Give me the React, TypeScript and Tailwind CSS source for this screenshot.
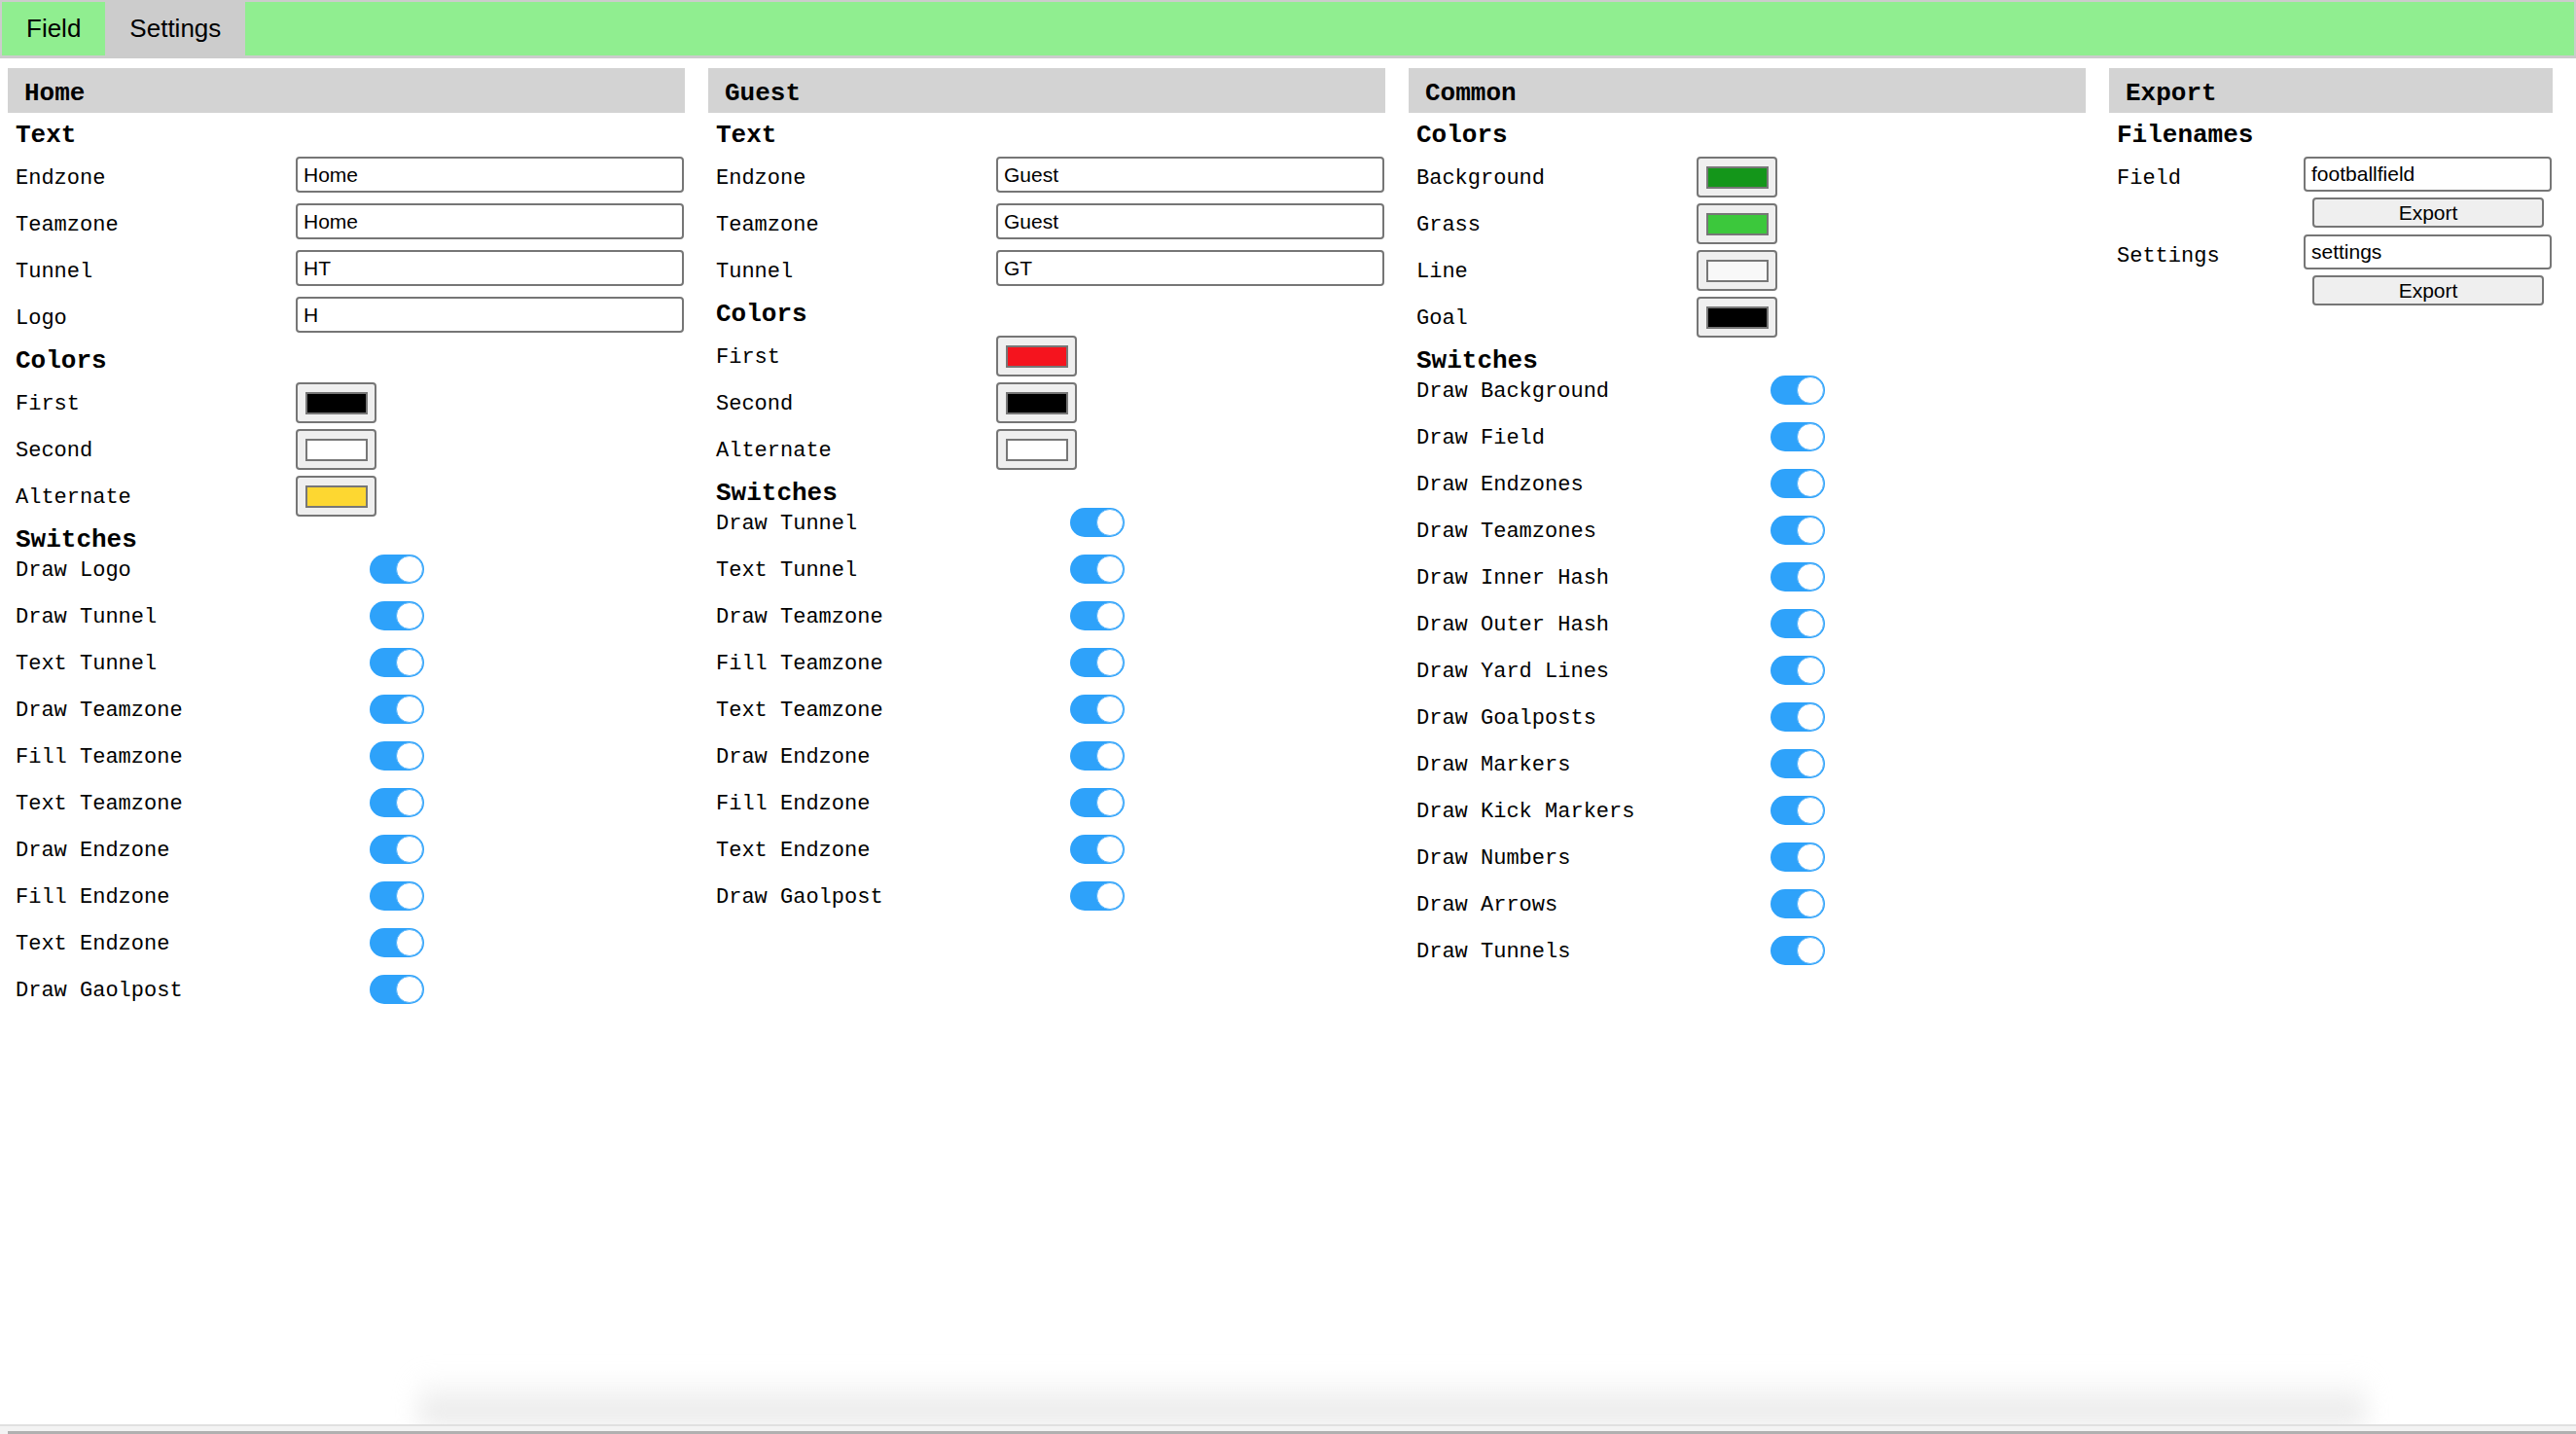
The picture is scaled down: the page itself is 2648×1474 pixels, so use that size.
import React from "react";

const MONO = "font-['Liberation_Mono',monospace]";
const SANS = "font-['Liberation_Sans',Arial,sans-serif]";

function Header({ children }: { children: React.ReactNode }) {
  return (
    <div className={`h-[46px] bg-[#d3d3d3] pl-[17px] pt-[13px] text-[26px] leading-[26px] font-bold text-black ${MONO}`}>
      {children}
    </div>
  );
}

function HeadTop({ children }: { children: React.ReactNode }) {
  return (
    <div className={`h-[38px] pl-[8px] pt-[10px] text-[26px] leading-[26px] font-bold text-black ${MONO}`}>{children}</div>
  );
}

function HeadMid({ children }: { children: React.ReactNode }) {
  return (
    <div className={`h-[40px] pl-[8px] pt-[12px] text-[26px] leading-[26px] font-bold text-black ${MONO}`}>{children}</div>
  );
}

function HeadSw({ children }: { children: React.ReactNode }) {
  return (
    <div className={`h-[31px] pl-[8px] pt-[12px] text-[26px] leading-[26px] font-bold text-black ${MONO}`}>{children}</div>
  );
}

function InputRow({ label, value }: { label: string; value: string }) {
  return (
    <div className="flex h-[48px] items-start">
      <div className={`w-[296px] shrink-0 pl-[8px] pt-[17px] text-[22px] leading-[26px] text-black ${MONO}`}>{label}</div>
      <div className="mt-[7px] mr-[1px] flex h-[37px] flex-1 items-center rounded-[4px] border-2 border-[#767676] bg-white pl-[6px]">
        <span className={`text-[21px] leading-[24px] text-black ${SANS}`}>{value}</span>
      </div>
    </div>
  );
}

function ColorRow({ label, color }: { label: string; color: string }) {
  return (
    <div className="flex h-[48px] items-start">
      <div className={`w-[296px] shrink-0 pl-[8px] pt-[17px] text-[22px] leading-[26px] text-black ${MONO}`}>{label}</div>
      <div className="mt-[7px] flex h-[42px] w-[83px] items-center justify-center rounded-[4px] border-2 border-[#767676] bg-[#efefef]">
        <div className="h-[23px] w-[64px] border-2 border-[#777777]" style={{ backgroundColor: color }} />
      </div>
    </div>
  );
}

function Toggle() {
  return (
    <div className="relative mt-[9px] h-[30px] w-[56px] rounded-full bg-[#2ea2fa]">
      <div className="absolute right-[1px] top-[1px] h-[28px] w-[28px] rounded-full border border-[#5ab5fb] bg-white" />
    </div>
  );
}

function SwitchRow({ label }: { label: string }) {
  return (
    <div className="flex h-[48px] items-start">
      <div className={`w-[372px] shrink-0 pl-[8px] pt-[13px] text-[22px] leading-[26px] text-black ${MONO}`}>{label}</div>
      <Toggle />
    </div>
  );
}

function ExportGroup({ label, value }: { label: string; value: string }) {
  return (
    <div className="flex h-[80px] items-start">
      <div className={`w-[200px] shrink-0 pl-[8px] pt-[17px] text-[22px] leading-[26px] text-black ${MONO}`}>{label}</div>
      <div className="flex flex-1 flex-col pt-[7px]">
        <div className="mr-[1px] flex h-[36px] items-center rounded-[4px] border-2 border-[#767676] bg-white pl-[6px]">
          <span className={`text-[21px] leading-[24px] text-black ${SANS}`}>{value}</span>
        </div>
        <div className="ml-[9px] mt-[6px] flex h-[31px] w-[238px] items-center justify-center rounded-[4px] border-2 border-[#767676] bg-[#efefef]">
          <span className={`text-[21px] leading-[24px] text-black ${SANS}`}>Export</span>
        </div>
      </div>
    </div>
  );
}

const homeSwitches = [
  "Draw Logo",
  "Draw Tunnel",
  "Text Tunnel",
  "Draw Teamzone",
  "Fill Teamzone",
  "Text Teamzone",
  "Draw Endzone",
  "Fill Endzone",
  "Text Endzone",
  "Draw Gaolpost",
];

const guestSwitches = [
  "Draw Tunnel",
  "Text Tunnel",
  "Draw Teamzone",
  "Fill Teamzone",
  "Text Teamzone",
  "Draw Endzone",
  "Fill Endzone",
  "Text Endzone",
  "Draw Gaolpost",
];

const commonSwitches = [
  "Draw Background",
  "Draw Field",
  "Draw Endzones",
  "Draw Teamzones",
  "Draw Inner Hash",
  "Draw Outer Hash",
  "Draw Yard Lines",
  "Draw Goalposts",
  "Draw Markers",
  "Draw Kick Markers",
  "Draw Numbers",
  "Draw Arrows",
  "Draw Tunnels",
];

export default function App() {
  return (
    <div className="relative h-[1474px] w-[2648px] overflow-hidden bg-white">
      {/* Tab bar */}
      <div className="flex h-[60px] border-2 border-b-[3px] border-[#cccccc] bg-[#90ee90]">
        <div className={`flex h-full items-center bg-[#90ee90] px-[25px] text-[26px] text-black ${SANS}`}>Field</div>
        <div className={`flex h-full items-center bg-[#cccccc] px-[25px] text-[26px] text-black ${SANS}`}>Settings</div>
      </div>

      {/* Columns */}
      <div className="mt-[10px] flex items-start gap-[24px] pl-[8px]">
        <div className="w-[696px] shrink-0">
          <Header>Home</Header>
          <HeadTop>Text</HeadTop>
          <InputRow label="Endzone" value="Home" />
          <InputRow label="Teamzone" value="Home" />
          <InputRow label="Tunnel" value="HT" />
          <InputRow label="Logo" value="H" />
          <HeadMid>Colors</HeadMid>
          <ColorRow label="First" color="#000000" />
          <ColorRow label="Second" color="#ffffff" />
          <ColorRow label="Alternate" color="#fdd731" />
          <HeadSw>Switches</HeadSw>
          {homeSwitches.map((s) => (
            <SwitchRow key={s} label={s} />
          ))}
        </div>

        <div className="w-[696px] shrink-0">
          <Header>Guest</Header>
          <HeadTop>Text</HeadTop>
          <InputRow label="Endzone" value="Guest" />
          <InputRow label="Teamzone" value="Guest" />
          <InputRow label="Tunnel" value="GT" />
          <HeadMid>Colors</HeadMid>
          <ColorRow label="First" color="#f5141e" />
          <ColorRow label="Second" color="#000000" />
          <ColorRow label="Alternate" color="#ffffff" />
          <HeadSw>Switches</HeadSw>
          {guestSwitches.map((s) => (
            <SwitchRow key={s} label={s} />
          ))}
        </div>

        <div className="w-[696px] shrink-0">
          <Header>Common</Header>
          <HeadTop>Colors</HeadTop>
          <ColorRow label="Background" color="#14961a" />
          <ColorRow label="Grass" color="#3cc83c" />
          <ColorRow label="Line" color="#f8f8f8" />
          <ColorRow label="Goal" color="#000000" />
          <HeadSw>Switches</HeadSw>
          {commonSwitches.map((s) => (
            <SwitchRow key={s} label={s} />
          ))}
        </div>

        <div className="w-[456px] shrink-0">
          <Header>Export</Header>
          <HeadTop>Filenames</HeadTop>
          <ExportGroup label="Field" value="footballfield" />
          <ExportGroup label="Settings" value="settings" />
        </div>
      </div>

      {/* bottom shadow + scrollbar artifact */}
      <div className="absolute bottom-[10px] left-[430px] right-[216px] h-[50px] bg-gradient-to-b from-transparent to-[#e4e4e4] blur-md" />
      <div className="absolute bottom-0 left-0 right-0 h-[10px] border-t-2 border-[#e0e0e0] bg-[#f3f3f3]">
        <div className="absolute bottom-0 left-[8px] right-0 h-[3px] bg-[#b0b0b0]" />
      </div>
    </div>
  );
}
